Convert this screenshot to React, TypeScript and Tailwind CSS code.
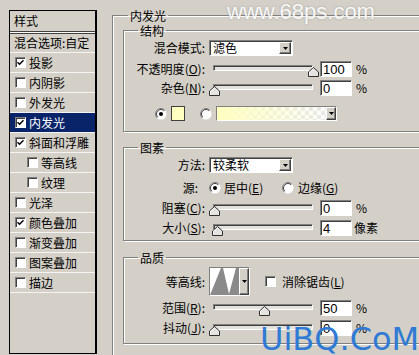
import type { ReactNode } from "react";

const SUNKEN =
  "border border-t-[#808080] border-l-[#808080] border-r-white border-b-white shadow-[inset_1px_1px_0_#404040]";
const RAISED =
  "border border-t-white border-l-white border-r-[#404040] border-b-[#404040] bg-[#d4d0c8] shadow-[inset_-1px_-1px_0_#808080]";
const GROUP = "border border-[#808080] shadow-[inset_1px_1px_0_#fff,1px_1px_0_#fff]";

type Layer = { name: string; checked?: boolean; active?: boolean; sub?: boolean };

const layers: Layer[] = [
  { name: "投影", checked: true },
  { name: "内阴影" },
  { name: "外发光" },
  { name: "内发光", checked: true, active: true },
  { name: "斜面和浮雕", checked: true },
  { name: "等高线", sub: true },
  { name: "纹理", sub: true },
  { name: "光泽" },
  { name: "颜色叠加", checked: true },
  { name: "渐变叠加" },
  { name: "图案叠加" },
  { name: "描边" },
];

function CheckBox({ checked }: { checked?: boolean }) {
  return (
    <span className={`flex h-[11px] w-[11px] shrink-0 items-center justify-center bg-white ${SUNKEN}`}>
      {checked && (
        <svg width="7" height="7" viewBox="0 0 7 7">
          <path d="M0.5 3.2 L2.6 5.3 L6.5 1.2" fill="none" stroke="#000" strokeWidth="1.5" />
        </svg>
      )}
    </span>
  );
}

function Radio({ on }: { on?: boolean }) {
  return (
    <svg width="12" height="12" viewBox="0 0 12 12" className="shrink-0">
      <circle cx="6" cy="6" r="5.5" fill="#fff" />
      <path d="M2.1 9.9A5.5 5.5 0 0 1 9.9 2.1" fill="none" stroke="#808080" />
      <path d="M2.8 9.2A4.5 4.5 0 0 1 9.2 2.8" fill="none" stroke="#404040" />
      {on && <circle cx="6" cy="6" r="2" fill="#000" />}
    </svg>
  );
}

function Arrow() {
  return (
    <svg width="5" height="3" viewBox="0 0 5 3">
      <path d="M0 0h5L2.5 3z" fill="#000" />
    </svg>
  );
}

function DropButton() {
  return (
    <span className={`flex h-[12px] w-[12px] shrink-0 items-center justify-center ${RAISED}`}>
      <Arrow />
    </span>
  );
}

function Select({ value }: { value: string }) {
  return (
    <div className={`flex h-[16px] w-[84px] shrink-0 items-center justify-between bg-white pl-[3px] pr-px ${SUNKEN}`}>
      <span className="leading-none">{value}</span>
      <DropButton />
    </div>
  );
}

function Label({ children, pad = "pr-[4px]" }: { children: ReactNode; pad?: string }) {
  return <div className={`w-[85px] shrink-0 text-right leading-none ${pad}`}>{children}</div>;
}

function Key({ k }: { k: string }) {
  return (
    <>
      (<span className="underline">{k}</span>)
    </>
  );
}

function Slider({ pos }: { pos: number }) {
  return (
    <div className="relative h-[16px] w-[108px] shrink-0">
      <div className={`absolute left-[4px] top-[4px] h-[6px] w-[100px] bg-[#e4e2de] ${SUNKEN}`} />
      <svg
        width="11"
        height="10"
        viewBox="0 0 11 10"
        className="absolute top-[6px]"
        style={{ left: Math.round(pos * 99) }}
      >
        <path d="M5.5 0.5 L10.5 5 L10.5 9.5 L0.5 9.5 L0.5 5 Z" fill="#e6e4e0" stroke="#303030" />
        <path d="M1.5 8.5 L1.5 5.4 L5.5 1.8" fill="none" stroke="#fff" />
      </svg>
    </div>
  );
}

function NumField({ value }: { value: string }) {
  return (
    <div
      className={`ml-[3px] flex h-[16px] w-[32px] shrink-0 items-center bg-white pl-[2px] font-['Liberation_Sans',sans-serif] text-[13px] leading-none ${SUNKEN}`}
    >
      {value}
    </div>
  );
}

function StylesList() {
  return (
    <div className="ml-[9px] mt-[10px] flex h-[344px] w-[88px] shrink-0 flex-col border-t border-b border-l border-r-2 border-black">
      <div className="flex h-[21px] items-center border-b border-[#404040] pl-[4px] leading-none">样式</div>
      <div className="h-px bg-white" />
      <div className="flex h-[20px] items-center border-t border-b border-t-[#404040] border-b-[#f4f4f4] pl-[4px] leading-none">
        混合选项:自定
      </div>
      {layers.map((l) => (
        <div
          key={l.name}
          className={`flex h-[20px] items-center gap-[3px] border-b border-[#f4f4f4] leading-none ${
            l.sub ? "pl-[17px]" : "pl-[5px]"
          } ${l.active ? "bg-[#0a246a] text-white" : ""}`}
        >
          <CheckBox checked={l.checked} />
          <span>{l.name}</span>
        </div>
      ))}
    </div>
  );
}

export default function App() {
  return (
    <div className="relative flex h-[355px] w-[419px] overflow-hidden bg-[#d4d0c8] font-['Noto_Sans_CJK_SC','Noto_Sans',sans-serif] text-[12px] text-black">
      <StylesList />

      <fieldset className={`ml-[15px] mt-[8px] w-[330px] shrink-0 self-start pb-[20px] ${GROUP}`}>
        <legend className="ml-[15px] px-[2px] leading-[15px]">内发光</legend>

        {/* 结构 */}
        <fieldset className={`ml-[10px] ${GROUP}`}>
          <legend className="ml-[14px] px-[2px] leading-[15px]">结构</legend>
          <div className="flex flex-col pb-[10px]">
            <div className="mt-[2px] flex h-[16px] items-center">
              <Label>混合模式:</Label>
              <Select value="滤色" />
            </div>
            <div className="mt-[5px] flex h-[16px] items-center">
              <Label>
                不透明度<Key k="O" />:
              </Label>
              <Slider pos={1} />
              <NumField value="100" />
              <span className="ml-[4px] leading-none">%</span>
            </div>
            <div className="mt-[3px] flex h-[16px] items-center">
              <Label>
                杂色<Key k="N" />:
              </Label>
              <Slider pos={0} />
              <NumField value="0" />
              <span className="ml-[4px] leading-none">%</span>
            </div>
            <div className="mt-[10px] flex h-[15px] items-center">
              <span className="ml-[31px]">
                <Radio on />
              </span>
              <div className="ml-[4px] h-[15px] w-[14px] border border-[#404040] bg-[#ffffc0]" />
              <span className="ml-[15px]">
                <Radio />
              </span>
              <div className={`ml-[4px] flex h-[15px] w-[121px] items-stretch ${SUNKEN}`}>
                <div className="flex-1 bg-[image:repeating-conic-gradient(#e8e8e8_0%_25%,#ffffff_0%_50%)] bg-[length:8px_8px]">
                  <div className="h-full w-full bg-linear-to-r from-[#ffffc0] to-[#ffffc0]/0" />
                </div>
                <span className={`flex w-[10px] items-center justify-center ${RAISED}`}>
                  <Arrow />
                </span>
              </div>
            </div>
          </div>
        </fieldset>

        {/* 图素 */}
        <fieldset className={`ml-[10px] mt-[8px] ${GROUP}`}>
          <legend className="ml-[14px] px-[2px] leading-[15px]">图素</legend>
          <div className="flex flex-col pb-[4px]">
            <div className="mt-[2px] flex h-[16px] items-center">
              <Label>方法:</Label>
              <Select value="较柔软" />
            </div>
            <div className="mt-[8px] flex h-[14px] items-center">
              <Label pad="pr-[11px]">源:</Label>
              <div className="flex w-[73px] shrink-0 items-center gap-[3px] leading-none">
                <Radio on />
                <span>
                  居中<Key k="E" />
                </span>
              </div>
              <div className="flex items-center gap-[4px] leading-none">
                <Radio />
                <span>
                  边缘<Key k="G" />
                </span>
              </div>
            </div>
            <div className="mt-[5px] flex h-[16px] items-center">
              <Label>
                阻塞<Key k="C" />:
              </Label>
              <Slider pos={0} />
              <NumField value="0" />
              <span className="ml-[4px] leading-none">%</span>
            </div>
            <div className="mt-[4px] flex h-[16px] items-center">
              <Label>
                大小<Key k="S" />:
              </Label>
              <Slider pos={0.03} />
              <NumField value="4" />
              <span className="ml-[2px] leading-none">像素</span>
            </div>
          </div>
        </fieldset>

        {/* 品质 */}
        <fieldset className={`ml-[10px] mt-[9px] ${GROUP}`}>
          <legend className="ml-[14px] px-[2px] leading-[15px]">品质</legend>
          <div className="flex flex-col pb-[7px]">
            <div className="mt-[2px] flex h-[29px] items-center">
              <Label>等高线:</Label>
              <div className={`flex h-[29px] w-[41px] shrink-0 ${SUNKEN}`}>
                <div className="flex-1 bg-white">
                  <svg width="29" height="27" viewBox="0 0 29 27" className="block">
                    <polygon points="0,27 11,0 13,0 19,26 26,0 29,0 29,27" fill="#8a8a8a" />
                  </svg>
                </div>
                <span className={`flex w-[10px] items-center justify-center ${RAISED}`}>
                  <Arrow />
                </span>
              </div>
              <span className="ml-[15px]">
                <CheckBox />
              </span>
              <span className="ml-[6px] leading-none">
                消除锯齿<Key k="L" />
              </span>
            </div>
            <div className="mt-[4px] flex h-[16px] items-center">
              <Label>
                范围<Key k="R" />:
              </Label>
              <Slider pos={0.5} />
              <NumField value="50" />
              <span className="ml-[4px] leading-none">%</span>
            </div>
            <div className="mt-[4px] flex h-[16px] items-center">
              <Label>
                抖动<Key k="J" />:
              </Label>
              <Slider pos={0} />
              <NumField value="0" />
              <span className="ml-[4px] leading-none">%</span>
            </div>
          </div>
        </fieldset>
      </fieldset>

      {/* watermarks */}
      <div className="absolute left-[227px] top-[1px] font-['Liberation_Sans',sans-serif] text-[22px] leading-[22px] text-white/95 [text-shadow:0_0_2px_rgba(120,120,120,0.6)]">
        www.68ps.com
      </div>
      <div className="absolute left-[260px] top-[323px] font-['DejaVu_Sans',sans-serif] text-[32px] leading-[32px] text-[#2f7ad4]">
        UiBQ.CoM
      </div>
    </div>
  );
}
